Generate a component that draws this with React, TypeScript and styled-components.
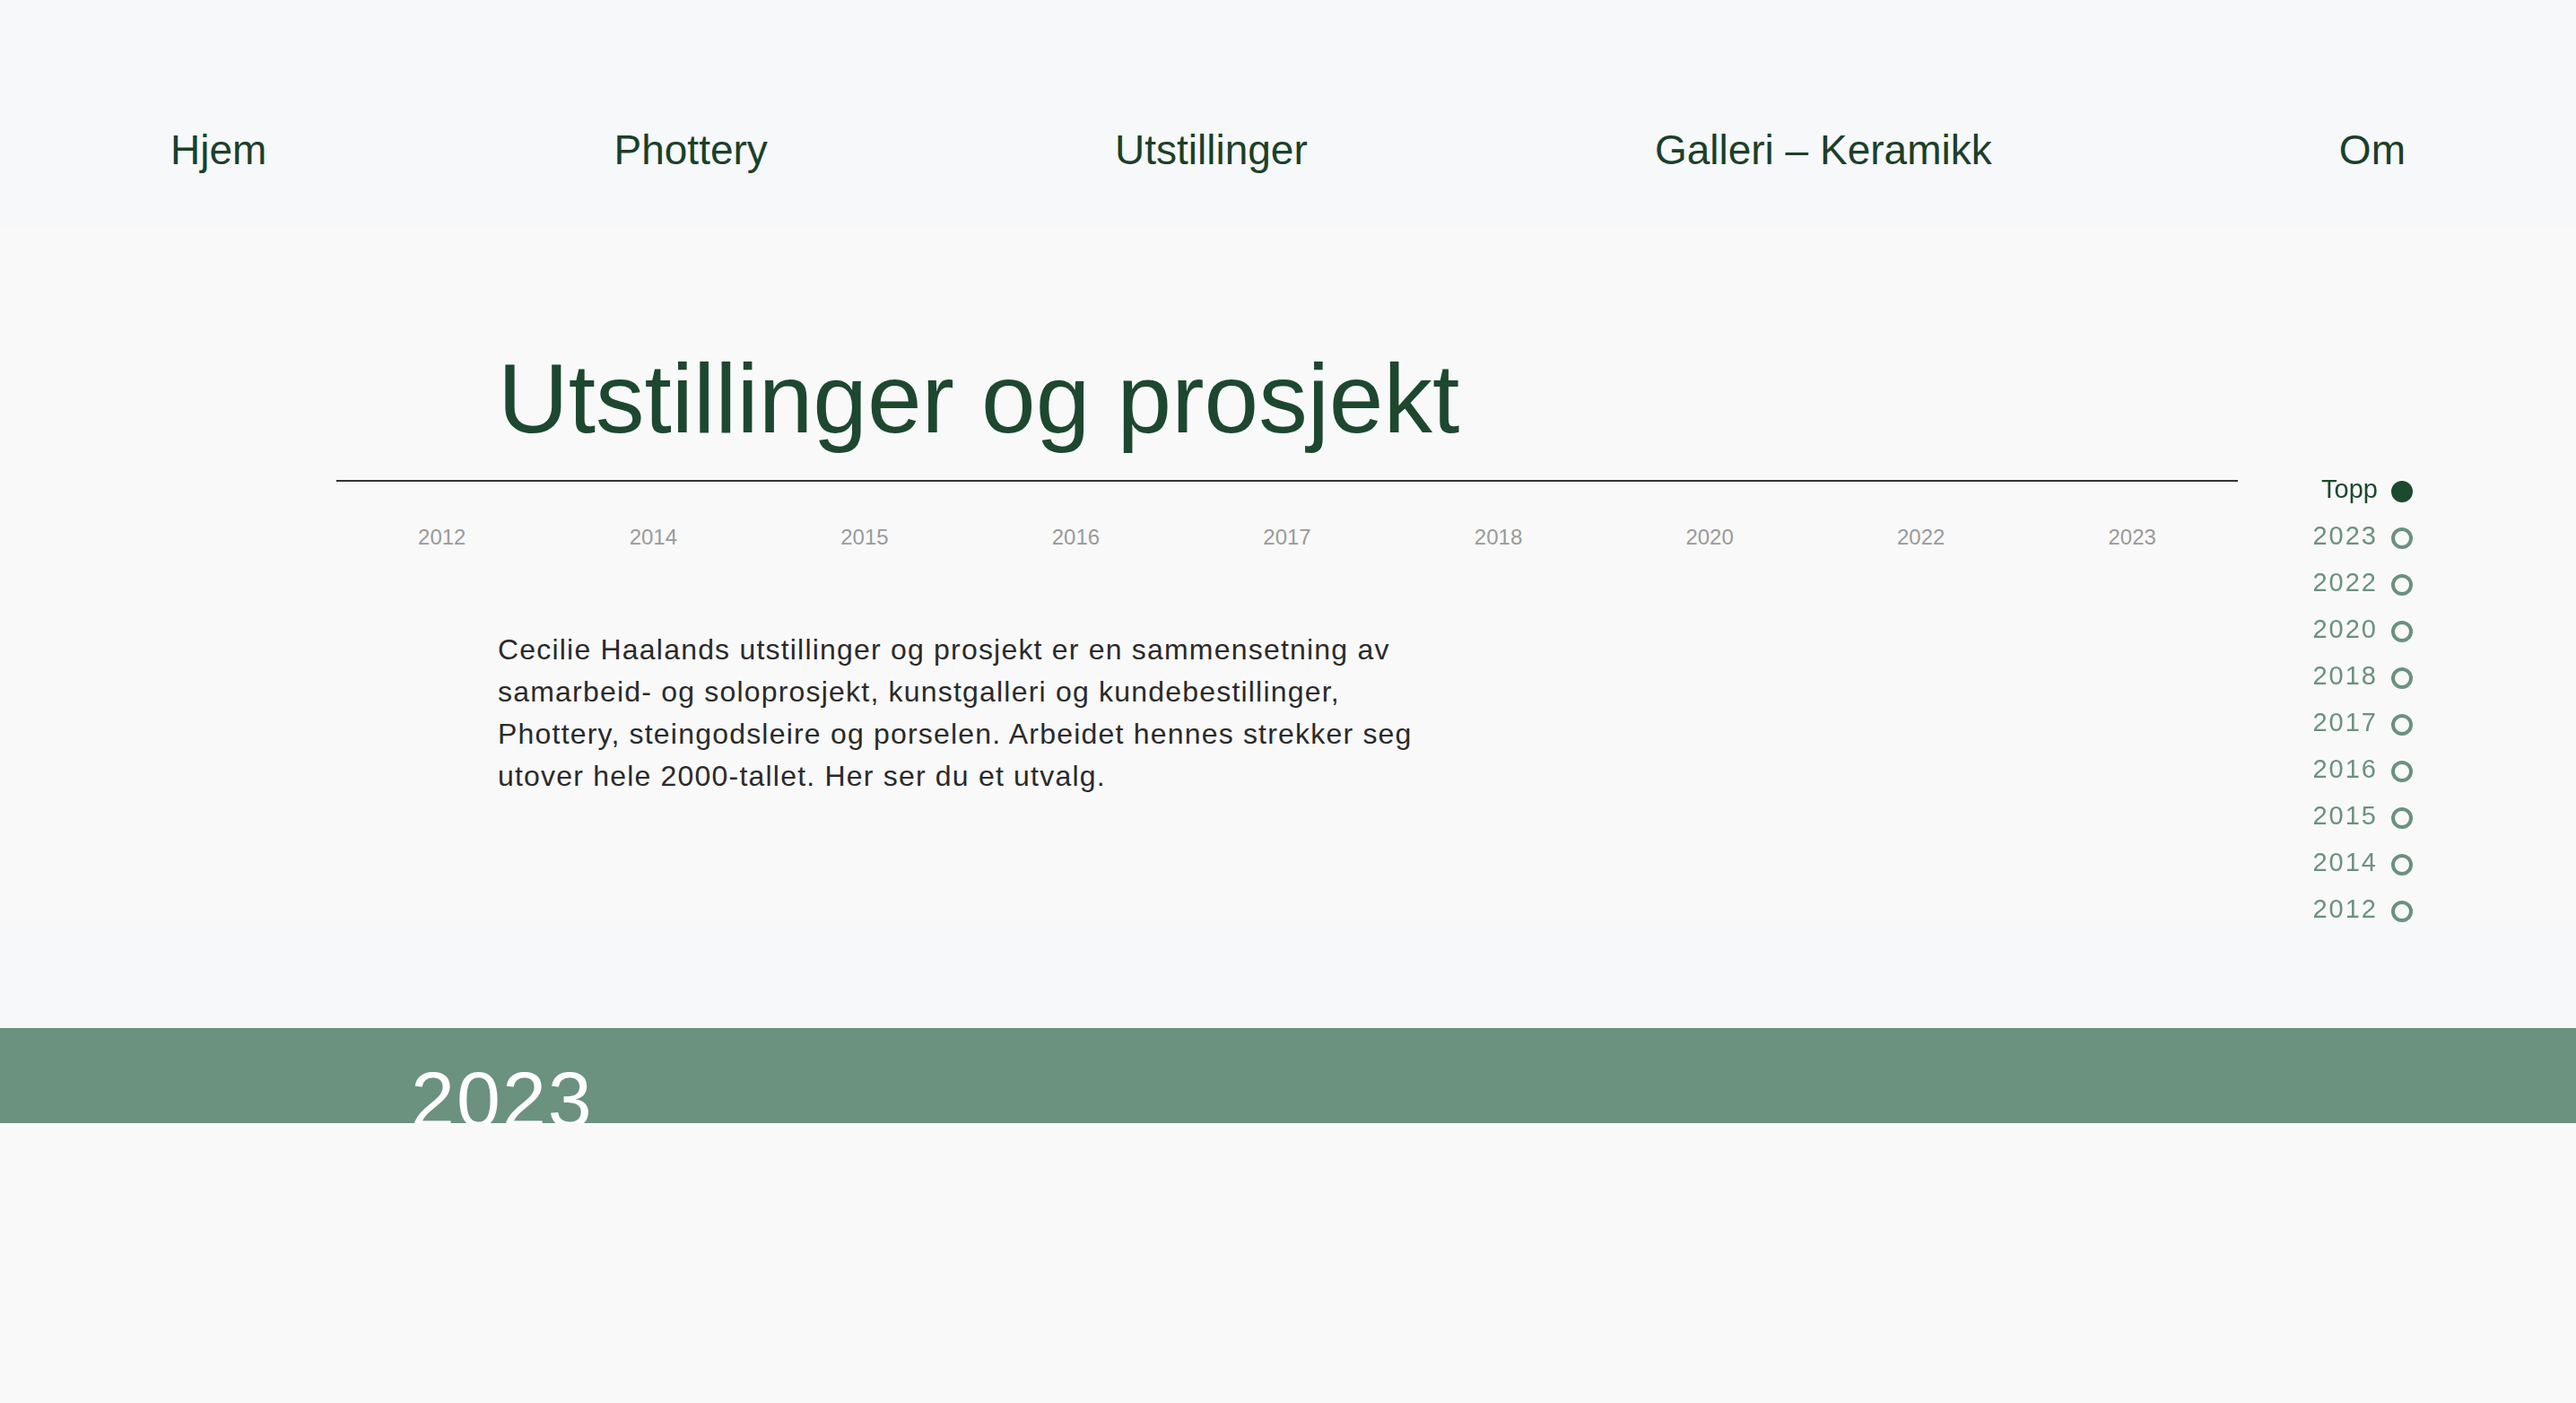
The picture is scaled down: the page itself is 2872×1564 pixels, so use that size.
import React from "react";
import styled, { createGlobalStyle } from "styled-components";

const GlobalStyle = createGlobalStyle`
  html, body {
    margin: 0;
    padding: 0;
    background: #f9f9f9;
  }
  body {
    font-family: "Liberation Sans", Arial, sans-serif;
  }
  * { box-sizing: border-box; }
`;

const Page = styled.div`
  min-height: 1564px;
  background: #f9f9f9;
`;

const Nav = styled.nav`
  height: 255px;
  padding: 140px 190px 0;
  background: #f7f8fa;
  display: flex;
  justify-content: space-between;
  align-items: flex-start;
`;

const NavLink = styled.a`
  font-size: 46px;
  line-height: normal;
  color: #1b4029;
  text-decoration: none;
  white-space: nowrap;
`;

const Intro = styled.section`
  background: #f9f9f9;
  padding: 135px 0 138px;
`;

const Content = styled.div`
  margin-left: 375px;
  width: 2120px;
`;

const Title = styled.h1`
  margin: 0;
  padding-left: 180px;
  font-size: 109px;
  line-height: 109px;
  font-weight: 400;
  color: #1d482f;
`;

const Rule = styled.hr`
  margin: 36px 0 0;
  border: none;
  height: 2px;
  background: #333;
`;

const YearRow = styled.ul`
  list-style: none;
  margin: 48px 0 0;
  padding: 0;
  display: grid;
  grid-template-columns: repeat(9, 1fr);
`;

const YearItem = styled.li`
  text-align: center;
  font-size: 24px;
  line-height: normal;
  color: #9a9a9a;
`;

const Lead = styled.p`
  margin: 88px 0 0 180px;
  max-width: 1040px;
  font-size: 32px;
  line-height: 47px;
  letter-spacing: 1.2px;
  color: #2a2a2a;
`;

const Spacer = styled.div`
  height: 119px;
  background: #f7f8fa;
`;

const YearBand = styled.section`
  height: 106px;
  background: #6b917f;
  overflow: hidden;
  padding: 36px 0 0 458px;
`;

const BandYear = styled.h2`
  margin: 0;
  font-size: 88px;
  line-height: 88px;
  font-weight: 400;
  letter-spacing: 2px;
  color: #ffffff;
`;

const SideNav = styled.ul`
  position: fixed;
  top: 519px;
  right: 182px;
  list-style: none;
  margin: 0;
  padding: 0;
  display: flex;
  flex-direction: column;
  align-items: flex-end;
`;

const SideItem = styled.li<{ $active?: boolean }>`
  height: 52px;
  display: flex;
  align-items: center;
  gap: 15px;
  font-size: 29px;
  letter-spacing: ${(p) => (p.$active ? "0" : "2px")};
  color: ${(p) => (p.$active ? "#1c4a2e" : "#6b917f")};
`;

const Dot = styled.span<{ $active?: boolean }>`
  width: 24px;
  height: 24px;
  margin-top: 6px;
  border-radius: 50%;
  border: 4px solid ${(p) => (p.$active ? "#1c4a2e" : "#6b917f")};
  background: ${(p) => (p.$active ? "#1c4a2e" : "transparent")};
  flex: none;
`;

const navItems = ["Hjem", "Phottery", "Utstillinger", "Galleri – Keramikk", "Om"];
const timelineYears = ["2012", "2014", "2015", "2016", "2017", "2018", "2020", "2022", "2023"];
const sideYears = ["2023", "2022", "2020", "2018", "2017", "2016", "2015", "2014", "2012"];

export default function App() {
  return (
    <Page>
      <GlobalStyle />
      <Nav>
        {navItems.map((n) => (
          <NavLink key={n} href="#">
            {n}
          </NavLink>
        ))}
      </Nav>
      <Intro>
        <Content>
          <Title>Utstillinger og prosjekt</Title>
          <Rule />
          <YearRow>
            {timelineYears.map((y) => (
              <YearItem key={y}>{y}</YearItem>
            ))}
          </YearRow>
          <Lead>
            Cecilie Haalands utstillinger og prosjekt er en sammensetning av samarbeid- og
            soloprosjekt, kunstgalleri og kundebestillinger, Phottery, steingodsleire og
            porselen. Arbeidet hennes strekker seg utover hele 2000-tallet. Her ser du et
            utvalg.
          </Lead>
        </Content>
      </Intro>
      <Spacer />
      <YearBand>
        <BandYear>2023</BandYear>
      </YearBand>
      <SideNav>
        <SideItem $active>
          Topp
          <Dot $active />
        </SideItem>
        {sideYears.map((y) => (
          <SideItem key={y}>
            {y}
            <Dot />
          </SideItem>
        ))}
      </SideNav>
    </Page>
  );
}
